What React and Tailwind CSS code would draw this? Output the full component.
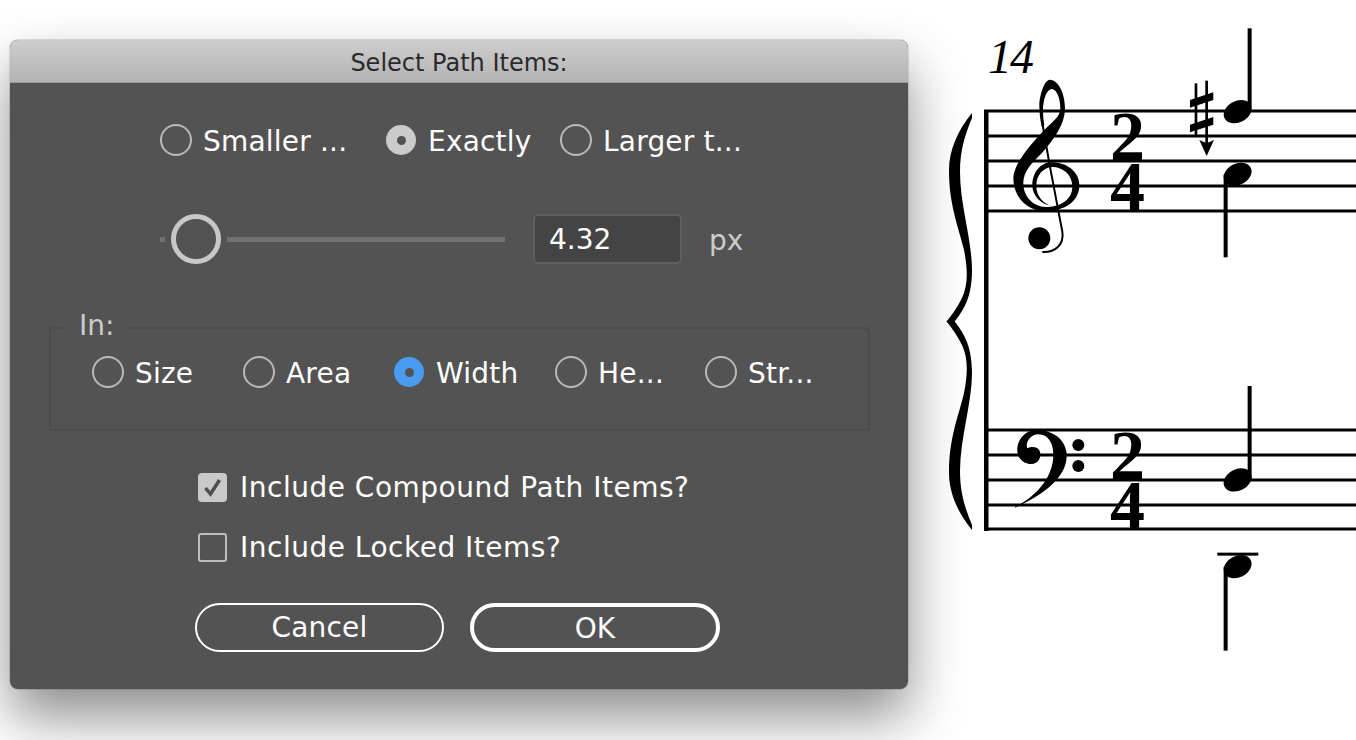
const FONT = "font-['DejaVu_Sans',sans-serif]";

function Radio({ label, selected, blue }) {
  return (
    <div className="flex items-center">
      {selected ? (
        <div className={'flex items-center justify-center w-[30px] h-[30px] mx-px rounded-full ' + (blue ? 'bg-[#4a9cf0]' : 'bg-[#cbcbcb]')}>
          <div className="w-[9px] h-[9px] rounded-full bg-[#535353]" />
        </div>
      ) : (
        <div className="w-[32px] h-[32px] rounded-full border-2 border-[#b9b9b9]" />
      )}
      <span className="ml-[11px] pt-[3px] text-[28px] leading-[29px] tracking-[0.2px] text-white whitespace-nowrap">{label}</span>
    </div>
  );
}

function CheckRow({ label, checked, className }) {
  return (
    <div className={'flex items-center pl-[188px] ' + className}>
      {checked ? (
        <div className="flex items-center justify-center w-[29px] h-[29px] rounded-[4px] bg-[#c9c9c9]">
          <svg width="19" height="19" viewBox="0 0 19 19">
            <path d="M2.5 10 L7.5 16 L16.5 2" fill="none" stroke="#4f4f4f" strokeWidth="3.5" />
          </svg>
        </div>
      ) : (
        <div className="w-[29px] h-[29px] rounded-[3px] border-2 border-[#bdbdbd]" />
      )}
      <span className="ml-[13px] text-[28px] leading-[29px] tracking-[0.5px] text-white whitespace-nowrap">{label}</span>
    </div>
  );
}

function Dialog() {
  return (
    <div className={'shrink-0 w-[898px] h-[649px] mt-[40px] ml-[10px] rounded-[8px] overflow-hidden bg-[#535353] shadow-[0_0_0_1px_rgba(0,0,0,0.12),0_28px_55px_rgba(0,0,0,0.45)] ' + FONT}>
      <div className="h-[43px] flex items-center justify-center bg-gradient-to-b from-[#cecece] to-[#b3b3b3] border-b border-[#9b9b9b]">
        <span className="pt-[3px] text-[24px] text-[#2a2a2a]">Select Path Items:</span>
      </div>

      <div className="mt-[41px] pl-[150px] grid grid-cols-[225px_175px_auto]">
        <Radio label="Smaller ..." />
        <Radio label="Exactly" selected />
        <Radio label="Larger t..." />
      </div>

      <div className="mt-[58px] pl-[150px] flex items-center">
        <div className="w-[5px] h-[5px] bg-[#727272]" />
        <div className="ml-[6px] w-[50px] h-[50px] rounded-full border-[5px] border-[#c8c8c8]" />
        <div className="ml-[6px] w-[278px] h-[5px] bg-[#727272]" />
        <input
          readOnly
          value="4.32"
          className="ml-[28px] w-[149px] h-[50px] pl-[14px] rounded-[5px] bg-[#444444] border-2 border-[#5f5f5f] text-[28px] text-white outline-none"
        />
        <span className="ml-[27px] pt-[3px] text-[28px] text-[#cccccc]">px</span>
      </div>

      <fieldset className="mt-[46px] mx-[39px] w-[821px] pb-[41px] rounded-[4px] border-2 border-[#4c4c4c]">
        <legend className="ml-[16px] pl-[12px] pr-[13px] h-[36px] text-[28px] leading-[32px] text-[#cccccc]">In:</legend>
        <div className="mt-[10px] pl-[41px] grid grid-cols-[151px_150px_162px_150px_auto]">
          <Radio label="Size" />
          <Radio label="Area" />
          <Radio label="Width" selected blue />
          <Radio label="He..." />
          <Radio label="Str..." />
        </div>
      </fieldset>

      <CheckRow className="mt-[42px]" label="Include Compound Path Items?" checked />
      <CheckRow className="mt-[31px]" label="Include Locked Items?" />

      <div className="mt-[41px] pl-[185px] flex">
        <button className="w-[249px] h-[49px] pt-px rounded-full border-2 border-white text-[28px] tracking-[0.2px] text-white">Cancel</button>
        <button className="ml-[26px] w-[250px] h-[49px] pt-px rounded-full border-4 border-white text-[28px] text-white">OK</button>
      </div>
    </div>
  );
}

// quarter note, coordinates are the 3x crop ones
function Note({ cx, cy }) {
  return <ellipse cx={cx} cy={cy} rx="44" ry="32" transform={`rotate(-27 ${cx} ${cy})`} fill="#000" />;
}

function TimeSig({ x, y }) {
  return (
    <text className="font-['Liberation_Serif',serif] font-bold" fontSize="70" fill="#000">
      <tspan x={x} y={y}>2</tspan>
      <tspan x={x} y={y + 50}>4</tspan>
    </text>
  );
}

const BRACE_HALF =
  'M972 113 C958 130 949 150 949 170 C949 205 958 225 964 250 C968 270 968 285 962 298 C957 308 952 315 946.5 321.5 L952 325 C962 312 972 300 972 270 C972 240 960 205 960 172 C960 150 965 135 972 118 Z';

function Score() {
  const top = [111, 136, 161, 186, 211];
  const bottom = [430, 455, 480, 505, 529];
  return (
    <svg className="shrink-0 ml-[22px]" width="426" height="740" viewBox="930 0 426 740">
      {[...top, ...bottom].map((y) => (
        <rect key={y} x="984" y={y - 1.5} width="372" height="3" fill="#000" />
      ))}
      <rect x="984" y="110" width="4.5" height="421" fill="#000" />

      {/* brace */}
      <path d={BRACE_HALF} fill="#000" />
      <path d={BRACE_HALF} transform="matrix(1 0 0 -1 0 643)" fill="#000" />

      <text x="988" y="73" className="font-['Liberation_Serif',serif] italic" fontSize="48" fill="#000" letterSpacing="-2">14</text>

      <g transform="translate(1005 75) scale(0.3333)">
        {/* treble clef */}
        <path
          d="M135 14 C160 15 180 55 180 100 C180 150 145 195 110 235 C80 265 55 290 55 325 C55 365 85 396 122 396 C165 396 202 375 202 335 C202 300 175 276 140 276 C115 278 94 300 94 332 C94 365 115 385 140 393 C110 388 82 365 82 330 C82 295 105 262 140 262 C185 262 223 290 223 330 C223 380 180 408 120 408 C65 408 25 365 25 310 C25 270 70 215 118 165 C145 138 166 125 166 100 C166 70 155 42 140 42 C125 42 114 75 114 105 C114 125 116 140 118 150 L110 155 C105 130 103 110 103 90 C104 60 118 14 135 14 Z"
          fill="#000"
        />
        <path d="M110 125 C115 170 125 215 132 260 L172 470 C178 510 150 533 112 531" fill="none" stroke="#000" strokeWidth="6" />
        <circle cx="103" cy="490" r="33" fill="#000" />
      </g>

      <g transform="translate(930 20) scale(0.3333)">
        {/* sharp with arrow */}
        <rect x="794" y="190" width="8" height="155" fill="#000" />
        <rect x="826" y="182" width="8" height="190" fill="#000" />
        <path d="M780 240 L850 217 L850 240 L780 263 Z M780 314 L850 291 L850 314 L780 337 Z" fill="#000" />
        <path d="M808 360 L830 370 L852 360 L830 408 Z" fill="#000" />

        <Note cx={923} cy={275} />
        <rect x="953" y="25" width="12" height="240" fill="#000" />
        <Note cx={923} cy={463} />
        <rect x="881" y="463" width="12" height="249" fill="#000" />
      </g>

      <TimeSig x={1110} y={160} />
      <TimeSig x={1110} y={479} />

      <g transform="translate(930 340) scale(0.3333)">
        {/* bass clef */}
        <path
          d="M255 503 C340 465 415 410 410 340 C405 295 365 270 320 270 C285 270 260 300 262 335 C265 360 285 372 305 372 C325 372 335 352 330 335 C325 320 305 318 292 325 C285 310 300 283 325 283 C355 283 370 310 370 345 C370 410 320 470 255 500 Z"
          fill="#000"
        />
        <circle cx="445" cy="315" r="18" fill="#000" />
        <circle cx="445" cy="378" r="18" fill="#000" />

        <Note cx={923} cy={420} />
        <rect x="953" y="138" width="12" height="280" fill="#000" />
        <rect x="862" y="638" width="123" height="9" fill="#000" />
        <Note cx={923} cy={680} />
        <rect x="881" y="680" width="12" height="252" fill="#000" />
      </g>
    </svg>
  );
}

export default function App() {
  return (
    <div className="w-[1356px] h-[740px] overflow-hidden bg-white flex items-start">
      <Dialog />
      <Score />
    </div>
  );
}
